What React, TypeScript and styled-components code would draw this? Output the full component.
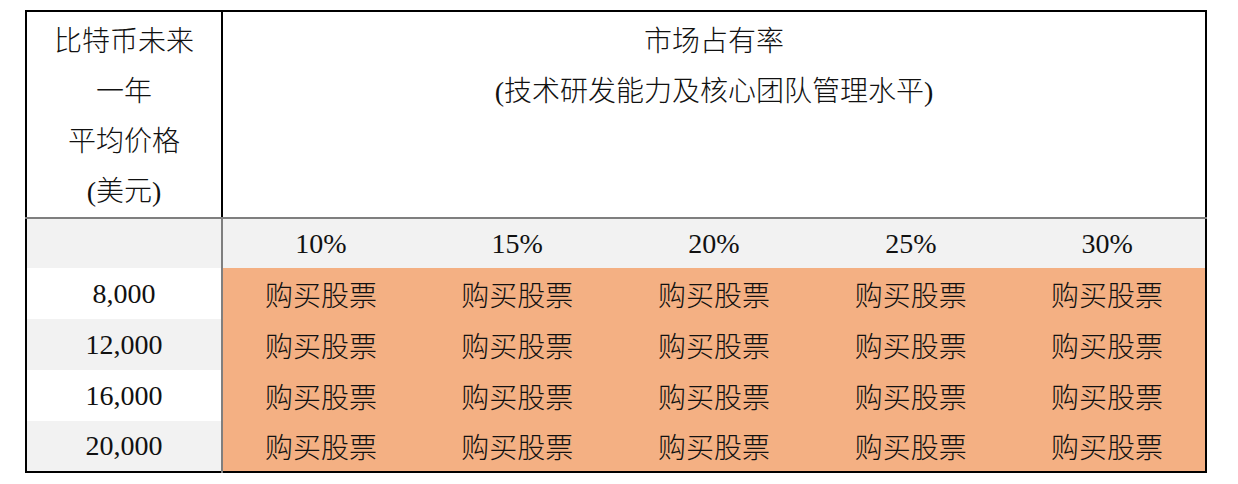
import React from 'react';
import styled, { createGlobalStyle } from 'styled-components';

const palette = {
  black: '#000000',
  line: '#7f7f7f',
  stripe: '#f2f2f2',
  orange: '#f4b083',
  text: '#111111',
};

const GlobalStyle = createGlobalStyle`
  html, body {
    margin: 0;
    padding: 0;
    background: #ffffff;
  }
  body {
    font-family: "Liberation Serif", "Noto Sans CJK SC", serif;
    color: ${palette.text};
  }
`;

const prices = ['8,000', '12,000', '16,000', '20,000'];
const shares = ['10%', '15%', '20%', '25%', '30%'];

function App() {
  return (
    <>
      <GlobalStyle />
      <Page>
        <Table>
          <colgroup>
            <col style={{ width: 196 }} />
            {shares.map((s) => (
              <col key={s} />
            ))}
          </colgroup>
          <thead>
            <tr>
              <HeadCell $first>
                <Line>比特币未来</Line>
                <Line>一年</Line>
                <Line>平均价格</Line>
                <Line>(美元)</Line>
              </HeadCell>
              <HeadCell colSpan={5}>
                <Line>市场占有率</Line>
                <Line>(技术研发能力及核心团队管理水平)</Line>
              </HeadCell>
            </tr>
          </thead>
          <tbody>
            <ShareRow>
              <PriceCell $striped />
              {shares.map((s) => (
                <ShareCell key={s}>{s}</ShareCell>
              ))}
            </ShareRow>
            {prices.map((p, i) => (
              <DataRow key={p}>
                <PriceCell $striped={i % 2 === 1}>{p}</PriceCell>
                {shares.map((s) => (
                  <AdviceCell key={s}>购买股票</AdviceCell>
                ))}
              </DataRow>
            ))}
          </tbody>
        </Table>
      </Page>
    </>
  );
}

const Page = styled.div`
  padding: 10px 0 0 25px;
`;

const Table = styled.table`
  width: 1182px;
  border-collapse: collapse;
  table-layout: fixed;
  border: 2px solid ${palette.black};
  font-size: 28px;
  font-weight: 300;

  td,
  th {
    padding: 0;
    text-align: center;
    font-weight: 300;
  }
`;

const HeadCell = styled.th<{ $first?: boolean }>`
  height: 204px;
  vertical-align: top;
  padding-top: 5px !important;
  box-sizing: border-box;
  border-bottom: 2px solid ${palette.line};
  border-right: ${(p) => (p.$first ? `2px solid ${palette.black}` : 'none')};
`;

const Line = styled.div`
  height: 50px;
  line-height: 50px;
  white-space: nowrap;
`;

const ShareRow = styled.tr`
  height: 50px;
  background: ${palette.stripe};
`;

const DataRow = styled.tr`
  height: 51px;
`;

const PriceCell = styled.td<{ $striped?: boolean }>`
  background: ${(p) => (p.$striped ? palette.stripe : '#ffffff')};
  border-right: 2px solid ${palette.line};
`;

const ShareCell = styled.td`
  background: ${palette.stripe};
`;

const AdviceCell = styled.td`
  background: ${palette.orange};
`;

export default App;
